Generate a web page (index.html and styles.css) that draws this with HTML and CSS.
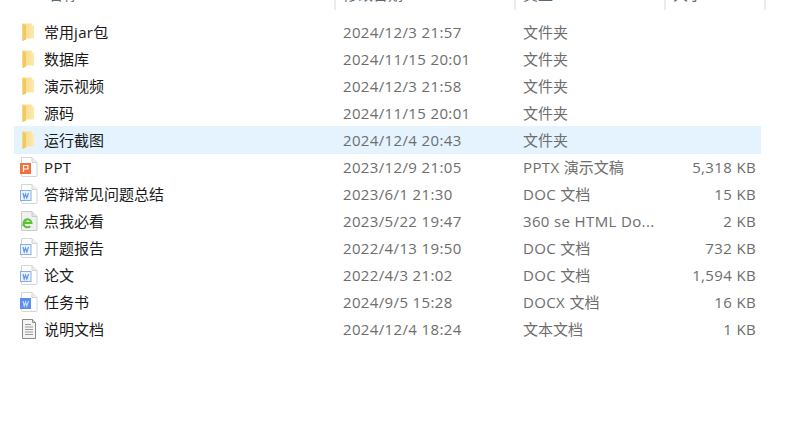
FILE: index.html
```html
<!DOCTYPE html>
<html lang="zh-CN">
<head>
<meta charset="utf-8">
<title>文件列表</title>
<link rel="stylesheet" href="styles.css">
</head>
<body>
<svg class="defs" width="0" height="0" aria-hidden="true">
  <defs>
    <linearGradient id="fg" x1="0" y1="0" x2="1" y2="0">
      <stop offset="0" stop-color="#f6d784"/><stop offset="1" stop-color="#fdeab0"/>
    </linearGradient>
    <symbol id="folder" viewBox="0 0 18 20">
      <path d="M2.500 1.500h9.500v2h2v13H6v1l-3.500 1.500z" fill="url(#fg)"/>
      <path d="M2.500 1.500l3.500 2v14l-3.500 1.500z" fill="#f2c95f"/>
    </symbol>
    <symbol id="page" viewBox="0 0 18 20">
      <path d="M1.500 .5h10.500l5 5v13a1 1 0 0 1-1 1H2.500a1 1 0 0 1-1-1z" fill="#fff" stroke="#d4d4d4"/>
      <path d="M12 .5v5h5" fill="#efefef" stroke="#d4d4d4"/>
    </symbol>
    <symbol id="word" viewBox="0 0 18 20">
      <use href="#page" width="18" height="20"/>
      <rect x=".5" y="6.500" width="10.500" height="10" fill="#eaf2fd" stroke="#86aeec"/>
      <path d="M3 9l1.200 5 1.300-4 1.300 4L8.500 9" fill="none" stroke="#5a93ea" stroke-width="1.100"/>
    </symbol>
  </defs>
</svg>
<main class="list">
  <div class="head">
    <div class="hcell">名称</div>
    <div class="hcell">修改日期</div>
    <div class="hcell">类型</div>
    <div class="hcell">大小</div>
  </div>
  <div class="rows">
    <div class="row"><div class="name"><svg class="ico"><use href="#folder"/></svg><span>常用<span class="lat">jar</span>包</span></div><div class="cell lat">2024/12/3 21:57</div><div class="cell">文件夹</div><div class="size"></div></div>
    <div class="row"><div class="name"><svg class="ico"><use href="#folder"/></svg>数据库</div><div class="cell lat">2024/11/15 20:01</div><div class="cell">文件夹</div><div class="size"></div></div>
    <div class="row"><div class="name"><svg class="ico"><use href="#folder"/></svg>演示视频</div><div class="cell lat">2024/12/3 21:58</div><div class="cell">文件夹</div><div class="size"></div></div>
    <div class="row"><div class="name"><svg class="ico"><use href="#folder"/></svg>源码</div><div class="cell lat">2024/11/15 20:01</div><div class="cell">文件夹</div><div class="size"></div></div>
    <div class="row selected"><div class="name"><svg class="ico"><use href="#folder"/></svg>运行截图</div><div class="cell lat">2024/12/4 20:43</div><div class="cell">文件夹</div><div class="size"></div></div>
    <div class="row"><div class="name"><svg class="ico" viewBox="0 0 18 20"><use href="#page" width="18" height="20"/><rect x="0" y="6" width="11" height="11" fill="#f2703c"/><path d="M3.500 15V8.500h4.500v3.500H3.500" fill="none" stroke="#fff" stroke-width="1.200"/></svg><span class="lat">PPT</span></div><div class="cell lat">2023/12/9 21:05</div><div class="cell"><span class="lat">PPTX </span>演示文稿</div><div class="size lat">5,318 KB</div></div>
    <div class="row"><div class="name"><svg class="ico"><use href="#word"/></svg>答辩常见问题总结</div><div class="cell lat">2023/6/1 21:30</div><div class="cell"><span class="lat">DOC </span>文档</div><div class="size lat">15 KB</div></div>
    <div class="row"><div class="name"><svg class="ico" viewBox="0 0 18 20"><path d="M1.500 .5h10.500l5 5v14H1.500z" fill="#f0f0f0" stroke="#cacaca"/><path d="M12 .5v5h5" fill="#e2e2e2" stroke="#cacaca"/><path d="M3.800 12h7.700a4 4 0 1 0-1.200 3.200" fill="none" stroke="#58c22e" stroke-width="2"/><path d="M1.500 14.500c2-.5 4-2.500 5-5" fill="none" stroke="#58c22e" stroke-width="1"/></svg>点我必看</div><div class="cell lat">2023/5/22 19:47</div><div class="cell lat">360 se HTML Do...</div><div class="size lat">2 KB</div></div>
    <div class="row"><div class="name"><svg class="ico"><use href="#word"/></svg>开题报告</div><div class="cell lat">2022/4/13 19:50</div><div class="cell"><span class="lat">DOC </span>文档</div><div class="size lat">732 KB</div></div>
    <div class="row"><div class="name"><svg class="ico"><use href="#word"/></svg>论文</div><div class="cell lat">2022/4/3 21:02</div><div class="cell"><span class="lat">DOC </span>文档</div><div class="size lat">1,594 KB</div></div>
    <div class="row"><div class="name"><svg class="ico" viewBox="0 0 18 20"><use href="#page" width="18" height="20"/><rect x="0" y="6" width="11" height="11" fill="#5b8ef0"/><path d="M3 9l1.200 5 1.300-4 1.300 4L8.500 9" fill="none" stroke="#cfe0ff" stroke-width="1.100"/></svg>任务书</div><div class="cell lat">2024/9/5 15:28</div><div class="cell"><span class="lat">DOCX </span>文档</div><div class="size lat">16 KB</div></div>
    <div class="row"><div class="name"><svg class="ico" viewBox="0 0 18 20"><path d="M2.500 .5h10l3 3v16h-13z" fill="#f4f4f4" stroke="#8a8a8a"/><path d="M12.500 .5v3h3" fill="#ddd" stroke="#8a8a8a"/><path d="M5 5.500h6M5 8h8M5 10.500h8M5 13h8M5 15.500h8" stroke="#9a9a9a"/></svg>说明文档</div><div class="cell lat">2024/12/4 18:24</div><div class="cell">文本文档</div><div class="size lat">1 KB</div></div>
  </div>
</main>
</body>
</html>
```
FILE: styles.css
```css
html, body {
  margin: 0;
  background: #fff;
  overflow: hidden;
}
.defs {
  display: block;
  height: 0;
}
.list {
  width: 802px;
  height: 426px;
  padding-left: 14px;
  box-sizing: border-box;
  font-family: "Open Sans", "Noto Sans CJK SC", sans-serif;
  font-size: 15px;
}
.lat {
  letter-spacing: .36px;
}
.head, .row {
  display: grid;
  grid-template-columns: 322px 180px 150px 95px;
  width: 747px;
}
.head {
  height: 10px;
  width: 752px;
  grid-template-columns: 322px 180px 150px 100px;
  overflow: hidden;
}
.hcell {
  display: flex;
  align-items: flex-end;
  height: 10px;
  box-sizing: border-box;
  border-right: 2px solid #ececec;
  padding: 0 0 8px 7px;
  line-height: 16px;
  color: #5a6a7a;
}
.hcell:first-child {
  padding-left: 34px;
}
.rows {
  padding-top: 9px;
}
.row {
  height: 27px;
  line-height: 27px;
  color: #6d6d6d;
  white-space: nowrap;
}
.row.selected {
  background: #e5f3ff;
  box-shadow: 0 -1px 0 #e5f3ff;
}
.name {
  display: flex;
  align-items: center;
  height: 26px;
  color: #1a1a1a;
}
.ico {
  width: 18px;
  height: 20px;
  margin: 0 6px;
  flex: none;
}
.cell {
  padding-left: 7px;
}
.size {
  padding-right: 5px;
  text-align: right;
}
```
